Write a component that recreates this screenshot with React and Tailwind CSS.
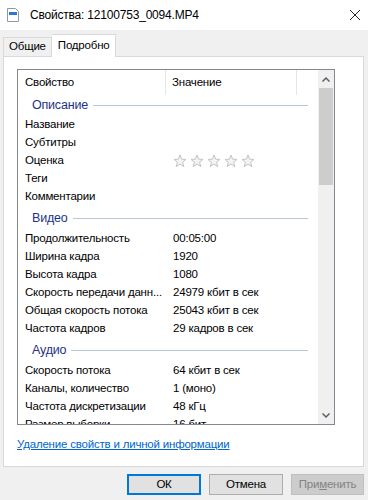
import React from "react";

const font = { fontFamily: '"Liberation Sans", "Noto Sans", sans-serif' };

const groups = [
  {
    title: "Описание",
    h: "h-[21px]",
    rows: [
      ["Название", ""],
      ["Субтитры", ""],
      ["Оценка", "stars"],
      ["Теги", ""],
      ["Комментарии", ""],
    ],
  },
  {
    title: "Видео",
    h: "h-[24px]",
    rows: [
      ["Продолжительность", "00:05:00"],
      ["Ширина кадра", "1920"],
      ["Высота кадра", "1080"],
      ["Скорость передачи данн...", "24979 кбит в сек"],
      ["Общая скорость потока", "25043 кбит в сек"],
      ["Частота кадров", "29 кадров в сек"],
    ],
  },
  {
    title: "Аудио",
    h: "h-[24px]",
    rows: [
      ["Скорость потока", "64 кбит в сек"],
      ["Каналы, количество", "1 (моно)"],
      ["Частота дискретизации", "48 кГц"],
      ["Размер выборки", "16 бит"],
    ],
  },
];

const Star = () => (
  <svg width="14" height="14" viewBox="0 0 14 14">
    <path
      d="M7 1 L8.6 5.2 L13 5.4 L9.6 8.2 L10.8 12.6 L7 10.1 L3.2 12.6 L4.4 8.2 L1 5.4 L5.4 5.2 Z"
      fill="#f4f4f4"
      stroke="#c4c4c4"
      strokeWidth="1"
      strokeLinejoin="round"
    />
  </svg>
);

const FileIcon = () => (
  <svg width="12" height="14" viewBox="0 0 12 14">
    <path d="M0.5 0.5 H8.5 L11.5 3.5 V13.5 H0.5 Z" fill="#ffffff" stroke="#8c9aa8" />
    <rect x="2" y="4" width="8" height="3" fill="#2b79c8" />
  </svg>
);

const App = () => {
  return (
    <div
      className="w-[368px] h-[500px] bg-[#f0f0f0] flex flex-col text-[11.5px] tracking-[-0.2px] text-black overflow-hidden"
      style={font}
    >
      {/* заголовок окна */}
      <div className="h-[30px] bg-white flex items-center pl-[7px] pr-[7px]">
        <FileIcon />
        <span className="ml-[11px] text-[12px]">Свойства: 12100753_0094.MP4</span>
        <svg className="ml-auto" width="12" height="12" viewBox="0 0 12 12">
          <path d="M1 1 L11 11 M11 1 L1 11" stroke="#222" strokeWidth="1" />
        </svg>
      </div>

      {/* вкладки */}
      <div className="flex items-end pl-[3px] pt-[4px] h-[26px]">
        <div className="h-[19px] px-[5px] border border-b-0 border-[#d9d9d9] bg-[#f0f0f0] flex items-center">
          Общие
        </div>
        <div className="h-[23px] px-[6px] border border-b-0 border-l-0 border-[#d9d9d9] bg-white flex items-center relative z-10 -mb-px">
          Подробно
        </div>
      </div>

      {/* панель */}
      <div className="ml-[3px] mr-[4px] h-[411px] border border-[#d9d9d9] bg-white pl-[13px] pr-[28px] pt-[12px] flex flex-col">
        <div className="h-[356px] border border-[#828790] flex overflow-hidden">
          <div className="flex-1 overflow-hidden">
            <div className="h-[25px] flex items-center">
              <div className="w-[148px] pl-[7px] border-r border-[#e5e5e5] h-full flex items-center">
                Свойство
              </div>
              <div className="w-[131px] pl-[6px] border-r border-[#e5e5e5] h-full flex items-center">
                Значение
              </div>
            </div>
            {groups.map((g) => (
              <div key={g.title}>
                <div className={`${g.h} flex items-center pl-[14px] pr-[10px]`}>
                  <span className="text-[#1e3287] text-[12.5px]">{g.title}</span>
                  <div className="flex-1 h-px bg-[#b9c6d3] ml-[5px]" />
                </div>
                {g.rows.map(([k, v]) => (
                  <div key={k} className="h-[18px] flex items-center">
                    <div className="w-[148px] pl-[7px] whitespace-nowrap overflow-hidden">{k}</div>
                    <div className="pl-[7px] whitespace-nowrap flex items-center">
                      {v === "stars" ? (
                        <div className="flex gap-[3px]">
                          <Star />
                          <Star />
                          <Star />
                          <Star />
                          <Star />
                        </div>
                      ) : (
                        v
                      )}
                    </div>
                  </div>
                ))}
              </div>
            ))}
          </div>
          {/* полоса прокрутки */}
          <div className="w-[16px] bg-[#f0f0f0] flex flex-col">
            <div className="h-[18px] flex items-center justify-center">
              <svg width="8" height="5" viewBox="0 0 8 5">
                <path d="M0.5 4.5 L4 1 L7.5 4.5" stroke="#606060" strokeWidth="1.5" fill="none" />
              </svg>
            </div>
            <div className="mx-px h-[97px] bg-[#cdcdcd]" />
            <div className="flex-1" />
            <div className="h-[17px] flex items-center justify-center">
              <svg width="8" height="5" viewBox="0 0 8 5">
                <path d="M0.5 0.5 L4 4 L7.5 0.5" stroke="#606060" strokeWidth="1.5" fill="none" />
              </svg>
            </div>
          </div>
        </div>
        <div className="mt-[11px]">
          <span className="text-[#0066cc] underline">Удаление свойств и личной информации</span>
        </div>
      </div>

      {/* кнопки */}
      <div className="flex justify-end gap-[8px] pr-[4px] mt-[7px]">
        <button className="w-[74px] h-[21px] bg-[#e1e1e1] border-2 border-[#0078d7] flex items-center justify-center">
          ОК
        </button>
        <button className="w-[74px] h-[21px] bg-[#e1e1e1] border border-[#adadad] flex items-center justify-center">
          Отмена
        </button>
        <button className="w-[73px] h-[21px] bg-[#cccccc] border border-[#bfbfbf] text-[#838383] flex items-center justify-center">
          При<span className="underline">м</span>енить
        </button>
      </div>
    </div>
  );
};

export default App;
